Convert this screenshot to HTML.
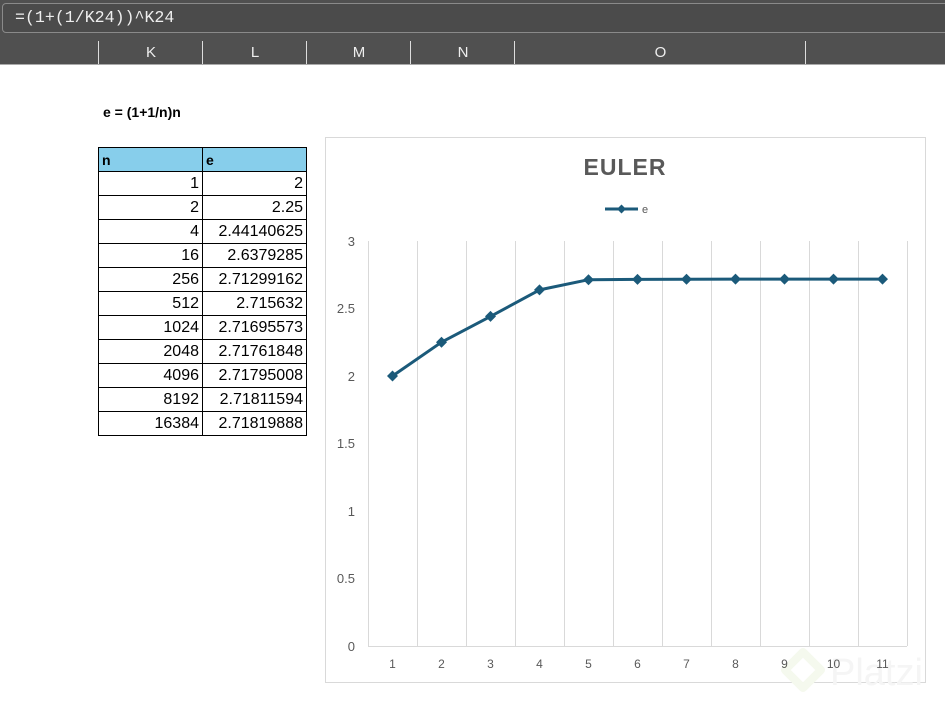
<!DOCTYPE html>
<html><head><meta charset="utf-8"><style>
body{margin:0;width:945px;height:706px;background:#fff;position:relative;overflow:hidden;font-family:"Liberation Sans",sans-serif}
.top{position:absolute;left:0;top:0;width:945px;height:64px;background:#505050;border-bottom:1px solid #aaa}
.fbox{position:absolute;left:2px;top:3px;width:950px;height:28px;border:1px solid #8a8a8a;border-radius:4px;background:#4b4b4b}
.fbox span{position:absolute;left:12px;top:4px;color:#eee;font-family:"Liberation Mono",monospace;font-size:16.6px}
.col{position:absolute;top:41px;height:23px;border-left:1px solid #ddd;color:#eee;font-size:15px;text-align:center;line-height:24px}
table{position:absolute;left:98px;top:147px;border-collapse:collapse;font-size:16px;table-layout:fixed}
td{border:1px solid #000;width:104px;height:24px;padding:0 3px 0 0;text-align:right;box-sizing:border-box;line-height:22px}
th{background:#87ceeb;border:1px solid #000;width:104px;height:24px;text-align:left;padding-left:3px;font-size:14px;box-sizing:border-box}
</style></head><body>
<div class="top"><div class="fbox"><span>=(1+(1/K24))^K24</span></div>
<div class="col" style="left:98px;width:104px">K</div>
<div class="col" style="left:202px;width:104px">L</div>
<div class="col" style="left:306px;width:104px">M</div>
<div class="col" style="left:410px;width:104px">N</div>
<div class="col" style="left:514px;width:291px">O</div>
<div class="col" style="left:805px;width:140px"></div>
</div>
<div style="position:absolute;left:103px;top:104px;font-weight:bold;font-size:14px">e = (1+1/n)n</div>
<table>
<tr><th>n</th><th>e</th></tr>
<tr><td>1</td><td>2</td></tr>
<tr><td>2</td><td>2.25</td></tr>
<tr><td>4</td><td>2.44140625</td></tr>
<tr><td>16</td><td>2.6379285</td></tr>
<tr><td>256</td><td>2.71299162</td></tr>
<tr><td>512</td><td>2.715632</td></tr>
<tr><td>1024</td><td>2.71695573</td></tr>
<tr><td>2048</td><td>2.71761848</td></tr>
<tr><td>4096</td><td>2.71795008</td></tr>
<tr><td>8192</td><td>2.71811594</td></tr>
<tr><td>16384</td><td>2.71819888</td></tr>
</table>
<svg style="position:absolute;left:0;top:0" width="945" height="706" font-family="Liberation Sans,sans-serif">
<rect x="325.5" y="137.5" width="600" height="545" fill="none" stroke="#d9d9d9"/>
<text x="625" y="175" text-anchor="middle" font-size="23" font-weight="bold" fill="#595959" letter-spacing="1">EULER</text>
<line x1="605" y1="209" x2="638" y2="209" stroke="#1b5a7a" stroke-width="3"/>
<path d="M621.5 204.5l4.5 4.5-4.5 4.5-4.5-4.5z" fill="#1b5a7a"/>
<text x="642" y="213" font-size="11" fill="#595959">e</text>
<g stroke="#d9d9d9" stroke-width="1">
<line x1="368.5" y1="241" x2="368.5" y2="646"/><line x1="417.5" y1="241" x2="417.5" y2="646"/><line x1="466.5" y1="241" x2="466.5" y2="646"/><line x1="515.5" y1="241" x2="515.5" y2="646"/><line x1="564.5" y1="241" x2="564.5" y2="646"/><line x1="613.5" y1="241" x2="613.5" y2="646"/><line x1="662.5" y1="241" x2="662.5" y2="646"/><line x1="711.5" y1="241" x2="711.5" y2="646"/><line x1="760.5" y1="241" x2="760.5" y2="646"/><line x1="809.5" y1="241" x2="809.5" y2="646"/><line x1="858.5" y1="241" x2="858.5" y2="646"/><line x1="907.5" y1="241" x2="907.5" y2="646"/>
<line x1="368" y1="646.5" x2="907" y2="646.5"/>
</g>
<g font-size="13" fill="#595959" text-anchor="end">
<text x="355" y="246">3</text><text x="355" y="313">2.5</text><text x="355" y="381">2</text><text x="355" y="448">1.5</text><text x="355" y="516">1</text><text x="355" y="583">0.5</text><text x="355" y="651">0</text>
</g>
<path d="M803 652l18 18-18 18-18-18z" fill="none" stroke="#f5f9ee" stroke-width="8" stroke-linejoin="round"/>
<text x="830" y="685" font-size="38" fill="#f5f5f5">Platzi</text>
<g font-size="12" fill="#595959" text-anchor="middle">
<text x="392.5" y="668">1</text><text x="441.5" y="668">2</text><text x="490.5" y="668">3</text><text x="539.5" y="668">4</text><text x="588.5" y="668">5</text><text x="637.5" y="668">6</text><text x="686.5" y="668">7</text><text x="735.5" y="668">8</text><text x="784.5" y="668">9</text><text x="833.5" y="668">10</text><text x="882.5" y="668">11</text>
</g>
<polyline fill="none" stroke="#1b5a7a" stroke-width="3" stroke-linejoin="round" points="392.5,376 441.5,342.2 490.5,316.4 539.5,289.9 588.5,279.7 637.5,279.4 686.5,279.2 735.5,279.1 784.5,279.1 833.5,279.1 882.5,279.1"/>
<g fill="#1b5a7a">
<path d="M392.5 370.5l5.5 5.5-5.5 5.5-5.5-5.5z"/><path d="M441.5 336.7l5.5 5.5-5.5 5.5-5.5-5.5z"/><path d="M490.5 310.9l5.5 5.5-5.5 5.5-5.5-5.5z"/><path d="M539.5 284.4l5.5 5.5-5.5 5.5-5.5-5.5z"/><path d="M588.5 274.2l5.5 5.5-5.5 5.5-5.5-5.5z"/><path d="M637.5 273.9l5.5 5.5-5.5 5.5-5.5-5.5z"/><path d="M686.5 273.7l5.5 5.5-5.5 5.5-5.5-5.5z"/><path d="M735.5 273.6l5.5 5.5-5.5 5.5-5.5-5.5z"/><path d="M784.5 273.6l5.5 5.5-5.5 5.5-5.5-5.5z"/><path d="M833.5 273.6l5.5 5.5-5.5 5.5-5.5-5.5z"/><path d="M882.5 273.6l5.5 5.5-5.5 5.5-5.5-5.5z"/>
</g>
</svg>
</body></html>
